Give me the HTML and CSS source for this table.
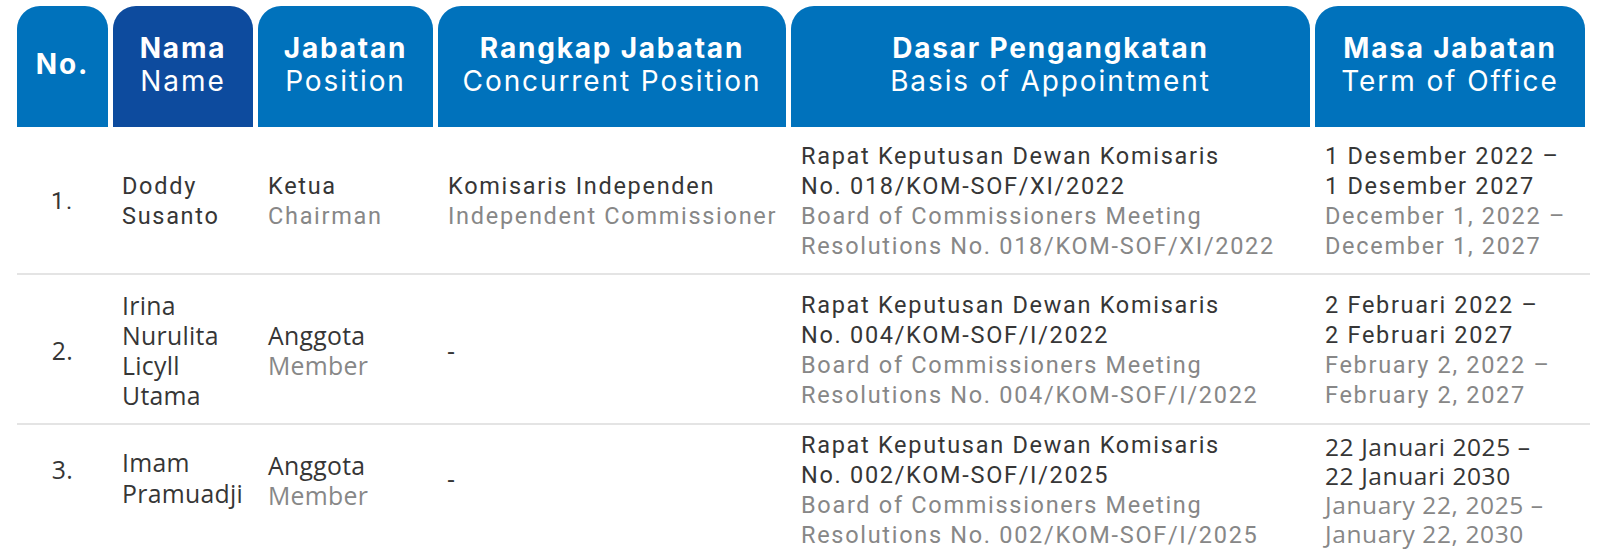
FILE: index.html
```html
<!DOCTYPE html>
<html lang="id">
<head>
<meta charset="utf-8">
<title>Dewan Komisaris</title>
<link rel="stylesheet" href="styles.css">
</head>
<body>
<div class="table">
  <div class="thead">
    <div class="th"><span class="th-id">No.</span></div>
    <div class="th th-dark"><span class="th-id">Nama</span><span class="th-en">Name</span></div>
    <div class="th"><span class="th-id">Jabatan</span><span class="th-en">Position</span></div>
    <div class="th"><span class="th-id">Rangkap Jabatan</span><span class="th-en">Concurrent Position</span></div>
    <div class="th"><span class="th-id">Dasar Pengangkatan</span><span class="th-en">Basis of Appointment</span></div>
    <div class="th"><span class="th-id">Masa Jabatan</span><span class="th-en">Term of Office</span></div>
  </div>

  <div class="tr tr-1">
    <div class="td td-no">1.</div>
    <div class="td td-name">Doddy Susanto</div>
    <div class="td"><div class="id">Ketua</div><div class="en">Chairman</div></div>
    <div class="td"><div class="id">Komisaris Independen</div><div class="en">Independent Commissioner</div></div>
    <div class="td"><div class="id">Rapat Keputusan Dewan Komisaris<br>No. 018/KOM-SOF/XI/2022</div><div class="en">Board of Commissioners Meeting<br>Resolutions No. 018/KOM-SOF/XI/2022</div></div>
    <div class="td"><div class="id">1 Desember 2022 –<br>1 Desember 2027</div><div class="en">December 1, 2022 –<br>December 1, 2027</div></div>
  </div>

  <div class="tr tr-2">
    <div class="td td-no alt">2.</div>
    <div class="td td-name alt">Irina Nurulita Licyll Utama</div>
    <div class="td alt"><div class="id">Anggota</div><div class="en">Member</div></div>
    <div class="td alt td-dash">-</div>
    <div class="td"><div class="id">Rapat Keputusan Dewan Komisaris<br>No. 004/KOM-SOF/I/2022</div><div class="en">Board of Commissioners Meeting<br>Resolutions No. 004/KOM-SOF/I/2022</div></div>
    <div class="td"><div class="id">2 Februari 2022 –<br>2 Februari 2027</div><div class="en">February 2, 2022 –<br>February 2, 2027</div></div>
  </div>

  <div class="tr tr-3">
    <div class="td td-no alt lift-no">3.</div>
    <div class="td td-name alt alt-3 lift-name">Imam Pramuadji</div>
    <div class="td alt lift"><div class="id">Anggota</div><div class="en">Member</div></div>
    <div class="td alt td-dash lift-dash">-</div>
    <div class="td"><div class="id">Rapat Keputusan Dewan Komisaris<br>No. 002/KOM-SOF/I/2025</div><div class="en">Board of Commissioners Meeting<br>Resolutions No. 002/KOM-SOF/I/2025</div></div>
    <div class="td alt alt-date"><div class="id">22 Januari 2025 –<br>22 Januari 2030</div><div class="en">January 22, 2025 –<br>January 22, 2030</div></div>
  </div>
</div>
</body>
</html>
```

FILE: styles.css
```css
html, body {
  margin: 0;
  background: #ffffff;
}

body {
  padding: 6px 0 0 17px;
  font-family: Roboto, "Liberation Sans", sans-serif;
  color: #363636;
}

.table {
  width: 1573px;
}

.thead,
.tr {
  display: grid;
  grid-template-columns: 91px 140px 175px 348px 519px 270px;
  column-gap: 5px;
}

.th {
  box-sizing: border-box;
  height: 121px;
  padding-bottom: 4px;
  background: #0072bc;
  border-radius: 23px 23px 0 0;
  display: flex;
  flex-direction: column;
  align-items: center;
  justify-content: center;
  color: #ffffff;
  font-family: Inter, "Open Sans", sans-serif;
  font-size: 28px;
  line-height: 33px;
  text-align: center;
  white-space: nowrap;
}

.th-dark {
  background: #0d4b9e;
}

.th-id {
  font-weight: 700;
  letter-spacing: 1.8px;
}

.th-en {
  font-weight: 400;
  letter-spacing: 1.9px;
}

.tr {
  border-bottom: 2px solid #e4e4e4;
  align-items: center;
}

.tr-1 {
  padding: 14px 0 12px;
}

.tr-2 {
  padding: 15px 0 13px;
}

.tr-3 {
  padding: 5px 0 0;
  border-bottom: none;
}

.td {
  padding-left: 10px;
  font-size: 23.5px;
  line-height: 30px;
  letter-spacing: 1.7px;
  white-space: nowrap;
}

.td-name {
  padding-left: 9px;
  white-space: normal;
}

.td-no {
  padding-left: 0;
  text-align: center;
}

.en {
  color: #878787;
}

.alt {
  font-family: "Open Sans", Roboto, sans-serif;
  font-size: 24.8px;
  letter-spacing: 0.3px;
}

.alt-3 {
  line-height: 31.5px;
}

.alt-date {
  font-size: 24.5px;
  line-height: 29px;
  letter-spacing: 0.6px;
}

.td-dash {
  padding-left: 9px;
}

.lift {
  padding-bottom: 20px;
}

.lift-name {
  padding-bottom: 24px;
}

.lift-dash {
  padding-bottom: 24px;
}

.lift-no {
  padding-bottom: 42px;
}
```
